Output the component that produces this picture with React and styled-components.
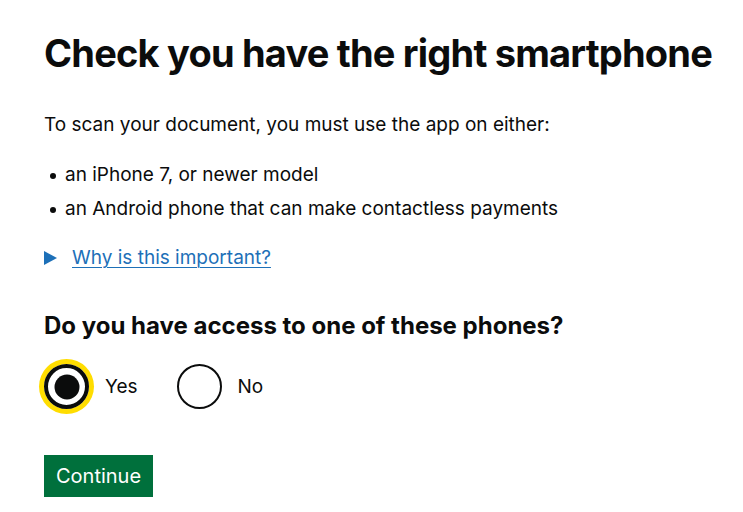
import React, { useState } from "react";
import styled, { createGlobalStyle } from "styled-components";

const GlobalStyle = createGlobalStyle`
  html, body {
    margin: 0;
    padding: 0;
    background: #ffffff;
  }
  body {
    font-family: "Inter", "Noto Sans", sans-serif;
    color: #0b0c0c;
  }
`;

function Radio({ label, checked, onSelect }) {
  return (
    <RadioItem onClick={onSelect}>
      <RadioCircle $checked={checked} />
      <RadioLabel>{label}</RadioLabel>
    </RadioItem>
  );
}

function App() {
  const [choice, setChoice] = useState("yes");

  return (
    <>
      <GlobalStyle />
      <Page>
        <Heading>Check you have the right smartphone</Heading>
        <Body>To scan your document, you must use the app on either:</Body>
        <BulletList>
          <Bullet>an iPhone 7, or newer model</Bullet>
          <Bullet>an Android phone that can make contactless payments</Bullet>
        </BulletList>
        <Details>
          <Triangle viewBox="0 0 13 14">
            <path d="M0 0 L13 7 L0 14 Z" fill="#1d70b8" />
          </Triangle>
          <SummaryLink href="#">Why is this important?</SummaryLink>
        </Details>
        <Fieldset>
          <Legend>Do you have access to one of these phones?</Legend>
          <RadioRow>
            <Radio label="Yes" checked={choice === "yes"} onSelect={() => setChoice("yes")} />
            <Radio label="No" checked={choice === "no"} onSelect={() => setChoice("no")} />
          </RadioRow>
        </Fieldset>
        <Button>Continue</Button>
      </Page>
    </>
  );
}

const Page = styled.main`
  display: flex;
  flex-direction: column;
  align-items: flex-start;
  padding: 29px 0 0 44px;
`;

const Heading = styled.h1`
  margin: 0;
  font-size: 38px;
  line-height: 48px;
  font-weight: 700;
  letter-spacing: -0.8px;
  white-space: nowrap;
`;

const Body = styled.p`
  margin: 33px 0 0;
  font-size: 19px;
  line-height: 30px;
`;

const BulletList = styled.ul`
  margin: 20px 0 0;
  padding: 0 0 0 21px;
  list-style: none;
  display: flex;
  flex-direction: column;
  gap: 4px;
`;

const Bullet = styled.li`
  position: relative;
  font-size: 19px;
  line-height: 30px;

  &::before {
    content: "";
    position: absolute;
    left: -15px;
    top: 13px;
    width: 6px;
    height: 6px;
    border-radius: 50%;
    background: #0b0c0c;
  }
`;

const Details = styled.div`
  margin-top: 19px;
  display: flex;
  align-items: center;
  gap: 15px;
  height: 30px;
`;

const Triangle = styled.svg`
  width: 13px;
  height: 14px;
`;

const SummaryLink = styled.a`
  font-size: 19px;
  line-height: 30px;
  color: #1d70b8;
  text-decoration: underline;
  text-underline-offset: 3px;
  text-decoration-thickness: 1px;
`;

const Fieldset = styled.fieldset`
  border: 0;
  margin: 37px 0 0;
  padding: 0;
`;

const Legend = styled.legend`
  padding: 0;
  font-size: 24px;
  line-height: 32px;
  font-weight: 700;
`;

const RadioRow = styled.div`
  display: flex;
  gap: 39px;
  margin-top: 22px;
`;

const RadioItem = styled.label`
  display: flex;
  align-items: center;
  gap: 16px;
  cursor: pointer;
`;

const RadioCircle = styled.span`
  position: relative;
  box-sizing: border-box;
  width: 45px;
  height: 45px;
  border-radius: 50%;
  border: ${(p) => (p.$checked ? "4px" : "2px")} solid #0b0c0c;
  box-shadow: ${(p) => (p.$checked ? "0 0 0 5px #ffdd00" : "none")};

  &::after {
    content: "";
    display: ${(p) => (p.$checked ? "block" : "none")};
    position: absolute;
    left: 50%;
    top: 50%;
    width: 25px;
    height: 25px;
    border-radius: 50%;
    background: #0b0c0c;
    transform: translate(-50%, -50%);
  }
`;

const RadioLabel = styled.span`
  font-size: 19px;
  line-height: 30px;
`;

const Button = styled.button`
  margin-top: 46px;
  height: 42px;
  padding: 0 12px;
  border: 0;
  border-radius: 0;
  background: #00703c;
  color: #ffffff;
  font-family: inherit;
  font-size: 20px;
  line-height: 42px;
  box-shadow: 0 3px 0 #002d18;
  cursor: pointer;
`;

export default App;
